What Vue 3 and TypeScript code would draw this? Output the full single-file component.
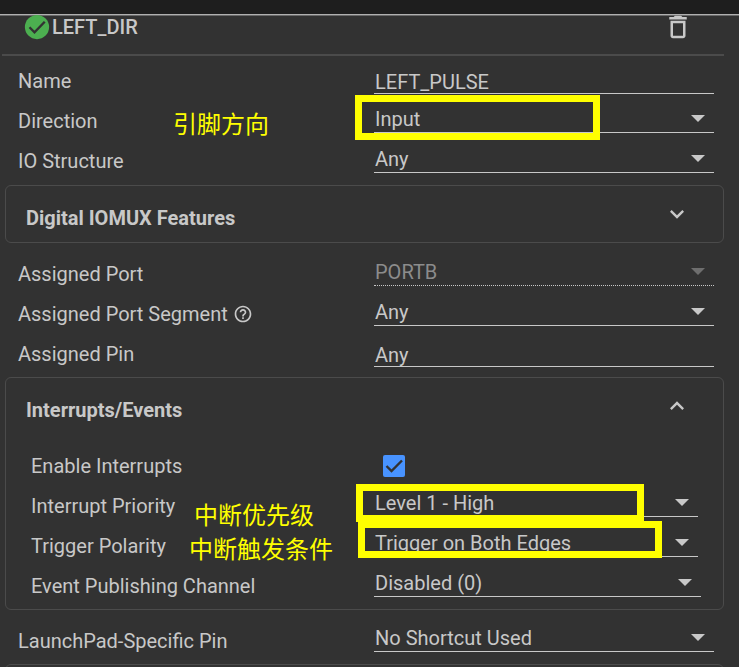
<script setup lang="ts">
import { ref } from 'vue'

interface Field {
  id: string
  label: string
  kind: 'text' | 'select' | 'check'
  value?: string
  options?: string[]
  disabled?: boolean
  help?: boolean
  wide?: boolean
  note?: string
  mark?: string
}

interface Block {
  id: string
  title?: string
  open?: boolean
  fields: Field[]
}

const pinFields: Field[] = [
  { id: 'name', label: 'Name', kind: 'text', value: 'LEFT_PULSE' },
  { id: 'direction', label: 'Direction', kind: 'select', value: 'Input', options: ['Input', 'Output'], note: '引脚方向', mark: 'direction' },
  { id: 'structure', label: 'IO Structure', kind: 'select', value: 'Any' },
]

const portFields: Field[] = [
  { id: 'port', label: 'Assigned Port', kind: 'select', value: 'PORTB', disabled: true },
  { id: 'segment', label: 'Assigned Port Segment', kind: 'select', value: 'Any', help: true },
  { id: 'pin', label: 'Assigned Pin', kind: 'text', value: 'Any' },
]

const interruptFields: Field[] = [
  { id: 'enable', label: 'Enable Interrupts', kind: 'check' },
  { id: 'priority', label: 'Interrupt Priority', kind: 'select', value: 'Level 1 - High', note: '中断优先级', mark: 'priority' },
  { id: 'polarity', label: 'Trigger Polarity', kind: 'select', value: 'Trigger on Both Edges', note: '中断触发条件', mark: 'polarity' },
  { id: 'channel', label: 'Event Publishing Channel', kind: 'select', value: 'Disabled (0)', wide: true },
]

const boardFields: Field[] = [
  { id: 'launchpad', label: 'LaunchPad-Specific Pin', kind: 'select', value: 'No Shortcut Used' },
]

const blocks: Block[] = [
  { id: 'general', fields: pinFields },
  { id: 'iomux', title: 'Digital IOMUX Features', open: false, fields: [] },
  { id: 'assignment', fields: portFields },
  { id: 'interrupts', title: 'Interrupts/Events', open: true, fields: interruptFields },
  { id: 'board', fields: boardFields },
]

const interruptsEnabled = ref(true)
</script>

<template>
  <div class="page">
    <div class="topbar"></div>
    <main class="instance">
      <header class="head">
        <svg class="icon" viewBox="0 0 24 24" aria-hidden="true">
          <circle cx="12" cy="12" r="9.7" fill="#4caf50" />
          <path d="M6 12.2l4 4 8.2-8.4" fill="none" stroke="#323232" stroke-width="1.9" />
        </svg>
        <h1>LEFT_DIR</h1>
        <button class="delete" type="button" aria-label="Delete">
          <svg class="icon" viewBox="0 0 24 24">
            <path fill="currentColor" d="M6 19c0 1.1.9 2 2 2h8c1.1 0 2-.9 2-2V7H6v12zM8 9h8v10H8V9zm7.5-5l-1-1h-5l-1 1H5v2h14V4h-3.5z" />
          </svg>
        </button>
      </header>

      <section v-for="block in blocks" :key="block.id" :class="[block.title ? 'panel' : 'group', block.id, { open: block.open }]">
        <button v-if="block.title" class="panel-head" type="button" :aria-expanded="block.open">
          <span class="panel-title">{{ block.title }}</span>
          <svg class="chevron" viewBox="0 0 24 24" aria-hidden="true">
            <path v-if="block.open" fill="currentColor" d="M12 8l-6 6 1.41 1.41L12 10.83l4.59 4.58L18 14z" />
            <path v-else fill="currentColor" d="M16.59 8.59L12 13.17 7.41 8.59 6 10l6 6 6-6z" />
          </svg>
        </button>
        <div v-if="block.fields.length" class="rows">
          <div v-for="f in block.fields" :key="f.id" class="row" :class="{ wide: f.wide }">
            <div class="caption">
              <label :for="f.id">{{ f.label }}</label>
              <svg v-if="f.help" class="help" viewBox="0 0 24 24" aria-hidden="true">
                <path fill="currentColor" d="M11 18h2v-2h-2v2zm1-16C6.48 2 2 6.48 2 12s4.48 10 10 10 10-4.48 10-10S17.52 2 12 2zm0 18c-4.41 0-8-3.59-8-8s3.59-8 8-8 8 3.59 8 8-3.59 8-8 8zm0-14c-2.21 0-4 1.79-4 4h2c0-1.1.9-2 2-2s2 .9 2 2c0 2-3 1.75-3 5h2c0-2.25 3-2.5 3-5 0-2.21-1.79-4-4-4z" />
              </svg>
            </div>
            <div class="control" :class="f.kind">
              <input v-if="f.kind === 'text'" :id="f.id" type="text" :value="f.value" />
              <template v-else-if="f.kind === 'select'">
                <select :id="f.id" :disabled="f.disabled">
                  <option v-for="o in f.options ?? [f.value]" :key="o">{{ o }}</option>
                </select>
                <svg class="arrow" :class="{ off: f.disabled }" viewBox="0 0 14 7" aria-hidden="true">
                  <path d="M0 0h14L7 7z" fill="currentColor" />
                </svg>
              </template>
              <template v-else>
                <input :id="f.id" v-model="interruptsEnabled" type="checkbox" />
                <svg v-if="interruptsEnabled" class="tick" viewBox="0 0 22 22" aria-hidden="true">
                  <path d="M3.5 11l5 5L19 5.5" fill="none" stroke="#323232" stroke-width="2.4" />
                </svg>
              </template>
              <span v-if="f.mark" class="mark" :class="f.mark"></span>
            </div>
            <span v-if="f.note" class="note" :class="f.mark">{{ f.note }}</span>
          </div>
        </div>
      </section>
      <div class="panel next"></div>
    </main>
  </div>
</template>

<style>
body {
  margin: 0;
  background: #323232;
}
</style>

<style scoped>
.page {
  height: 100vh;
  overflow: hidden;
  background: #323232;
  color: #c8c8c8;
  font-family: Roboto, "Noto Sans CJK SC", sans-serif;
  font-size: 20px;
  line-height: 24px;
}

.topbar {
  height: 14px;
  background: #1e1e1e;
}

.instance {
  border-top: 1px solid #b0b0b0;
  box-shadow: inset 0 1px #696969;
  padding: 1px 15px 0 2px;
}

.head {
  display: flex;
  align-items: center;
  height: 22px;
  padding: 0 31px 16px 20px;
  border-bottom: 2px solid #4b4b4b;
  margin-bottom: 5px;
}

h1 {
  margin: 0;
  font-size: 20px;
  font-weight: 500;
}

.icon {
  display: block;
  flex: none;
  width: 30px;
  height: 30px;
}

button {
  border: 0;
  padding: 0;
  background: none;
  color: inherit;
  font: inherit;
}

.delete {
  margin-left: auto;
}

.group {
  padding: 0 10px 0 16px;
}

.panel {
  margin: 4px 0 11px 3px;
  border: 1px solid #4b4b4b;
  border-radius: 6px;
}

.panel.open,
.panel.next {
  margin-top: 3px;
}

.panel .rows {
  padding: 12px 25px 3px;
}

.next {
  height: 20px;
}

.panel-head {
  display: flex;
  align-items: center;
  justify-content: space-between;
  width: 100%;
  height: 56px;
  padding: 0 32px 0 20px;
}

.panel-title {
  padding-top: 8px;
  font-weight: 700;
}

.chevron {
  width: 28px;
  height: 28px;
}

.row {
  position: relative;
  display: grid;
  grid-template-columns: 356fr 340fr;
  height: 40px;
}

.panel .row {
  grid-template-columns: 343fr 324fr;
}

.panel .row.wide {
  grid-template-columns: 343fr 327fr;
  margin-right: -3px;
}

.caption {
  display: flex;
  align-items: center;
  gap: 5px;
}

.help {
  width: 20px;
  height: 20px;
}

.control {
  position: relative;
  display: grid;
  align-content: end;
  align-items: center;
  padding-bottom: 8px;
}

.control.text {
  padding-bottom: 7px;
}

.interrupts .control.select,
.board .control.select {
  padding-bottom: 9px;
}

.control.check {
  align-content: center;
  padding: 0 0 0 9px;
}

.control > select,
.control > input,
.control > .arrow,
.control > .tick {
  grid-area: 1 / 1;
}

select,
input[type='text'] {
  box-sizing: border-box;
  width: 100%;
  height: 28px;
  margin: 0;
  border: 0;
  border-bottom: 1px solid #c8c8c8;
  border-radius: 0;
  padding: 0 0 0 1px;
  background: transparent;
  color: inherit;
  font: inherit;
  appearance: none;
  outline: 0;
}

input[type='text'] {
  height: 24px;
}

select:disabled {
  border-bottom: 1px dotted #c8c8c8;
  color: #8c8c8c;
  opacity: 1;
}

.arrow {
  justify-self: end;
  width: 14px;
  height: 7px;
  margin: 0 9px 2px 0;
  pointer-events: none;
}

.arrow.off {
  color: #6e6e6e;
}

input[type='checkbox'] {
  width: 22px;
  height: 22px;
  margin: 0;
  border-radius: 2px;
  appearance: none;
  border: 2px solid #c8c8c8;
}

input[type='checkbox']:checked {
  border: 0;
  background: #4893ff;
}

.tick {
  width: 22px;
  height: 22px;
  pointer-events: none;
}

.mark {
  position: absolute;
  border: 7px solid #ffff00;
  pointer-events: none;
}

.mark.direction {
  inset: -6px 114px 1px -19px;
}

.mark.priority {
  inset: -2px 54px 4px -18px;
}

.mark.polarity {
  inset: -5px 36px 8px -16px;
}

.note {
  position: absolute;
  top: 10px;
  color: #ffff00;
  font-family: "Noto Sans CJK SC", sans-serif;
  font-size: 24px;
  pointer-events: none;
}

.note.direction {
  left: 155px;
}

.note.priority {
  top: 16px;
  left: 163px;
}

.note.polarity {
  left: 158px;
}
</style>
